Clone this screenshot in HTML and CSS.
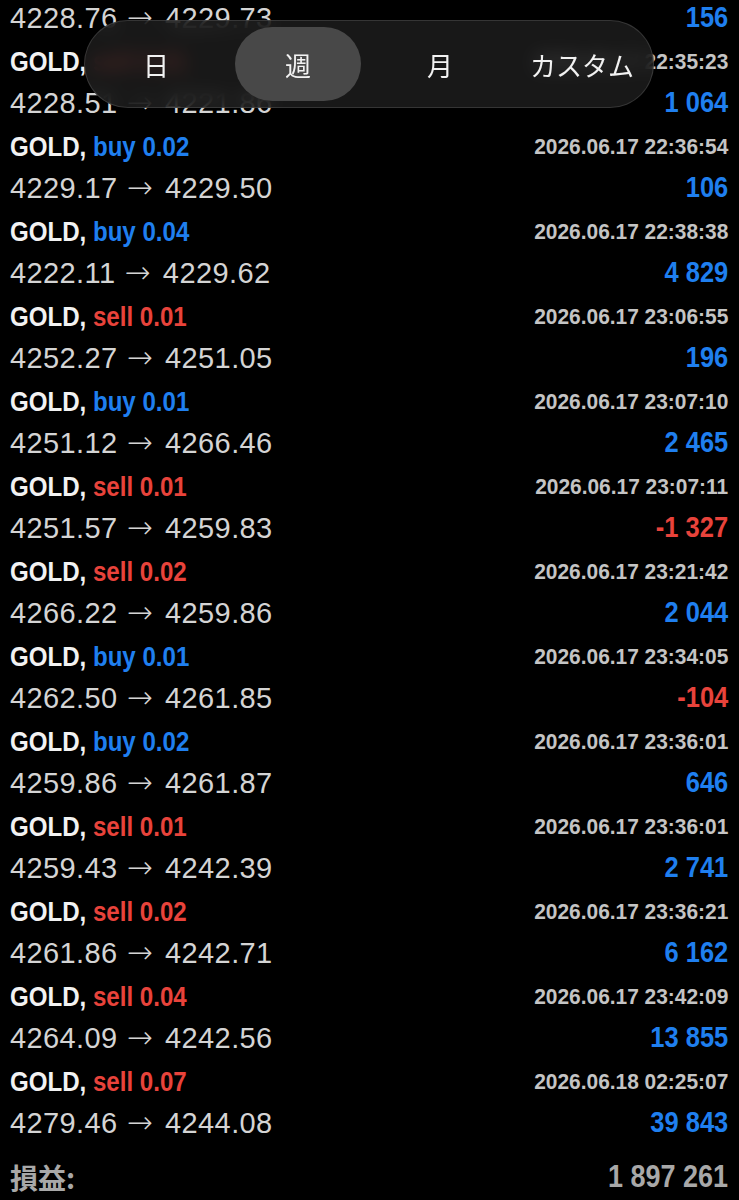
FILE: index.html
```html
<!DOCTYPE html>
<html lang="ja">
<head>
	<meta charset="UTF-8">
	<title>履歴</title>
	<link rel="stylesheet" href="styles.css">
</head>
<body>
	<div class="screen">
		<!-- 期間切替 -->
		<div class="period">
			<div class="seg">日</div>
			<div class="seg active">週</div>
			<div class="seg">月</div>
			<div class="seg">カスタム</div>
		</div>

		<div class="deals">
			<div class="deal">
				<div class="sym">GOLD, <span class="buy">buy 0.01</span></div>
				<div class="time">2026.06.17 22:30:12</div>
				<div class="price">4228.76<span class="arrow">→</span>4229.73</div>
				<div class="pl">156</div>
			</div>
			<div class="deal">
				<div class="sym">GOLD, <span class="sell">sell 0.01</span></div>
				<div class="time">2026.06.17 22:35:23</div>
				<div class="price">4228.51<span class="arrow">→</span>4221.86</div>
				<div class="pl">1 064</div>
			</div>
			<div class="deal">
				<div class="sym">GOLD, <span class="buy">buy 0.02</span></div>
				<div class="time">2026.06.17 22:36:54</div>
				<div class="price">4229.17<span class="arrow">→</span>4229.50</div>
				<div class="pl">106</div>
			</div>
			<div class="deal">
				<div class="sym">GOLD, <span class="buy">buy 0.04</span></div>
				<div class="time">2026.06.17 22:38:38</div>
				<div class="price">4222.11<span class="arrow">→</span>4229.62</div>
				<div class="pl">4 829</div>
			</div>
			<div class="deal">
				<div class="sym">GOLD, <span class="sell">sell 0.01</span></div>
				<div class="time">2026.06.17 23:06:55</div>
				<div class="price">4252.27<span class="arrow">→</span>4251.05</div>
				<div class="pl">196</div>
			</div>
			<div class="deal">
				<div class="sym">GOLD, <span class="buy">buy 0.01</span></div>
				<div class="time">2026.06.17 23:07:10</div>
				<div class="price">4251.12<span class="arrow">→</span>4266.46</div>
				<div class="pl">2 465</div>
			</div>
			<div class="deal">
				<div class="sym">GOLD, <span class="sell">sell 0.01</span></div>
				<div class="time">2026.06.17 23:07:11</div>
				<div class="price">4251.57<span class="arrow">→</span>4259.83</div>
				<div class="pl loss">-1 327</div>
			</div>
			<div class="deal">
				<div class="sym">GOLD, <span class="sell">sell 0.02</span></div>
				<div class="time">2026.06.17 23:21:42</div>
				<div class="price">4266.22<span class="arrow">→</span>4259.86</div>
				<div class="pl">2 044</div>
			</div>
			<div class="deal">
				<div class="sym">GOLD, <span class="buy">buy 0.01</span></div>
				<div class="time">2026.06.17 23:34:05</div>
				<div class="price">4262.50<span class="arrow">→</span>4261.85</div>
				<div class="pl loss">-104</div>
			</div>
			<div class="deal">
				<div class="sym">GOLD, <span class="buy">buy 0.02</span></div>
				<div class="time">2026.06.17 23:36:01</div>
				<div class="price">4259.86<span class="arrow">→</span>4261.87</div>
				<div class="pl">646</div>
			</div>
			<div class="deal">
				<div class="sym">GOLD, <span class="sell">sell 0.01</span></div>
				<div class="time">2026.06.17 23:36:01</div>
				<div class="price">4259.43<span class="arrow">→</span>4242.39</div>
				<div class="pl">2 741</div>
			</div>
			<div class="deal">
				<div class="sym">GOLD, <span class="sell">sell 0.02</span></div>
				<div class="time">2026.06.17 23:36:21</div>
				<div class="price">4261.86<span class="arrow">→</span>4242.71</div>
				<div class="pl">6 162</div>
			</div>
			<div class="deal">
				<div class="sym">GOLD, <span class="sell">sell 0.04</span></div>
				<div class="time">2026.06.17 23:42:09</div>
				<div class="price">4264.09<span class="arrow">→</span>4242.56</div>
				<div class="pl">13 855</div>
			</div>
			<div class="deal">
				<div class="sym">GOLD, <span class="sell">sell 0.07</span></div>
				<div class="time">2026.06.18 02:25:07</div>
				<div class="price">4279.46<span class="arrow">→</span>4244.08</div>
				<div class="pl">39 843</div>
			</div>
		</div>

		<div class="total">
			<div class="total-label">損益:</div>
			<div class="total-value">1 897 261</div>
		</div>
	</div>
</body>
</html>
```

FILE: styles.css
```css
html, body{
	margin: 0;
	padding: 0;
	background: #000;
}
.screen{
	position: relative;
	width: 739px;
	height: 1200px;
	overflow: hidden;
	background: #000;
}

/* 期間切替 */
.period{
	position: absolute;
	top: 20px;
	left: 84px;
	width: 570px;
	height: 88px;
	box-sizing: border-box;
	padding: 6px 0;
	display: grid;
	grid-template-columns: repeat(4, 1fr);
	border-radius: 44px;
	background: rgba(30,30,30,0.8);
	border: 1px solid rgba(255,255,255,0.13);
	backdrop-filter: blur(9px);
	z-index: 2;
}
.seg{
	display: flex;
	align-items: center;
	justify-content: center;
	border-radius: 37px;
	color: #f2f2f2;
	font-family: "Noto Sans CJK JP", sans-serif;
	font-size: 26px;
}
.seg.active{
	margin: 0 8px;
	background: #484848;
}

/* 取引リスト */
.deals{
	margin-top: -43px;
}
.deal{
	height: 85px;
	padding: 0 11px 0 10px;
	display: grid;
	grid-template-columns: 1fr auto;
	grid-template-rows: 40px 40px;
	align-items: center;
}
.sym{
	font-family: "Liberation Sans", Arial, sans-serif;
	font-weight: bold;
	font-size: 28px;
	color: #f2f2f2;
	transform: scaleX(0.86);
	transform-origin: left center;
}
.buy{
	color: #1f7fef;
}
.sell{
	color: #e8433b;
}
.time{
	text-align: right;
	font-family: "Liberation Sans", Arial, sans-serif;
	font-weight: bold;
	font-size: 22px;
	color: #c4c4c4;
	transform: scaleX(0.95);
	transform-origin: right center;
}
.price{
	font-family: "Liberation Sans", Arial, sans-serif;
	font-size: 29px;
	letter-spacing: 0.4px;
	color: #d4d4d4;
}
.arrow{
	font-family: "DejaVu Sans", sans-serif;
	font-weight: 200;
	font-size: 31px;
	margin: 0 12px 0 9px;
}
.pl{
	text-align: right;
	font-family: "Liberation Sans", Arial, sans-serif;
	font-weight: bold;
	font-size: 30px;
	color: #1f7fef;
	transform: scaleX(0.85);
	transform-origin: right center;
}
.pl.loss{
	color: #e8433b;
}

/* 合計 */
.total{
	display: flex;
	justify-content: space-between;
	align-items: center;
	height: 60px;
	padding: 0 11px 0 10px;
}
.total-label{
	font-family: "Noto Sans CJK JP", sans-serif;
	font-weight: bold;
	font-size: 28px;
	color: #a8a8a8;
}
.total-value{
	font-family: "Liberation Sans", Arial, sans-serif;
	font-weight: bold;
	font-size: 31px;
	color: #a8a8a8;
	transform: scaleX(0.87);
	transform-origin: right center;
}
```
